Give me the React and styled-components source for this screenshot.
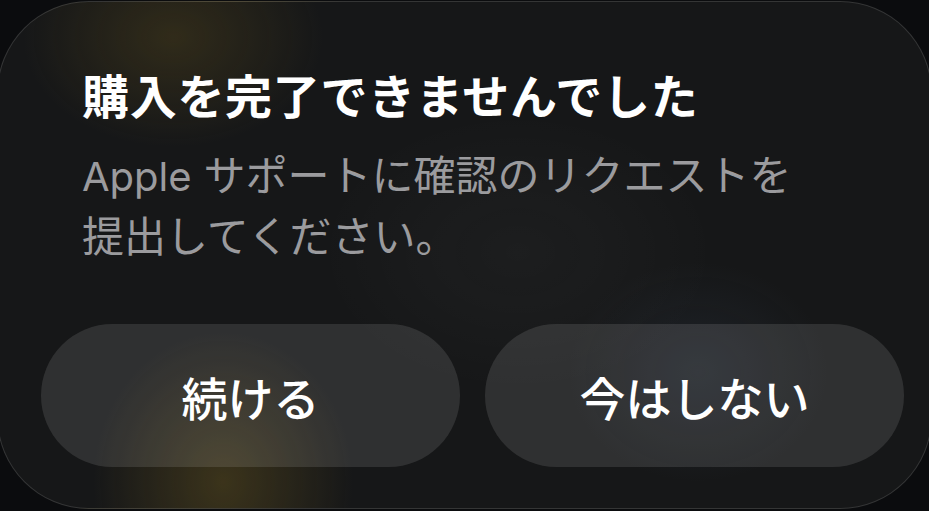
import styled, { createGlobalStyle } from "styled-components";

const GlobalStyle = createGlobalStyle`
  html, body {
    margin: 0;
    padding: 0;
    background: #0b0c0e;
    overflow: hidden;
  }
  body {
    font-family: Inter, "Noto Sans CJK JP", sans-serif;
    -webkit-font-smoothing: antialiased;
  }
`;

const Screen = styled.div`
  width: 929px;
  height: 511px;
  overflow: hidden;
`;

const Card = styled.div`
  box-sizing: border-box;
  width: 935px;
  height: 508px;
  margin: 1px 0 0 -3px;
  border-radius: 92px;
  border: 1.5px solid rgba(255, 255, 255, 0.13);
  background-color: #161718;
  background-image:
    radial-gradient(ellipse 150px 110px at 175px 35px, rgba(110, 90, 30, 0.3), transparent),
    radial-gradient(ellipse 130px 150px at 225px 480px, rgba(120, 98, 32, 0.38), transparent),
    radial-gradient(ellipse 130px 110px at 700px 370px, rgba(70, 90, 120, 0.16), transparent),
    radial-gradient(ellipse 200px 140px at 520px 250px, rgba(255, 255, 255, 0.03), transparent);
  padding: 64px 27px 41px 43px;
  display: flex;
  flex-direction: column;
`;

const Header = styled.div`
  padding-left: 41px;
  display: flex;
  flex-direction: column;
  gap: 24px;
`;

const Title = styled.h1`
  margin: 0;
  color: #ffffff;
  font-family: "Noto Sans CJK JP", sans-serif;
  font-weight: 700;
  font-size: 47px;
  line-height: 56px;
  letter-spacing: 0.7px;
`;

const Message = styled.p`
  margin: 0;
  color: #9b9b9e;
  font-family: Inter, "Noto Sans CJK JP", sans-serif;
  font-weight: 400;
  font-size: 42px;
  line-height: 60px;
`;

const Latin = styled.span`
  font-size: 40px;
  margin-right: 12px;
`;

const Actions = styled.div`
  margin-top: auto;
  display: grid;
  grid-template-columns: 1fr 1fr;
  gap: 25px;
`;

const Action = styled.button`
  height: 143px;
  border: none;
  border-radius: 72px;
  background: rgba(255, 255, 255, ${(p) => p.$tint});
  color: #ffffff;
  font-family: "Noto Sans CJK JP", sans-serif;
  font-weight: 500;
  font-size: 46px;
  line-height: 1;
  display: flex;
  align-items: center;
  justify-content: center;
  cursor: pointer;
`;

export default function App() {
  return (
    <Screen>
      <GlobalStyle />
      <Card>
        <Header>
          <Title>購入を完了できませんでした</Title>
          <Message>
            <Latin>Apple</Latin>サポートに確認のリクエストを
            <br />
            提出してください。
          </Message>
        </Header>
        <Actions>
          <Action $tint={0.11}>続ける</Action>
          <Action $tint={0.11}>今はしない</Action>
        </Actions>
      </Card>
    </Screen>
  );
}
